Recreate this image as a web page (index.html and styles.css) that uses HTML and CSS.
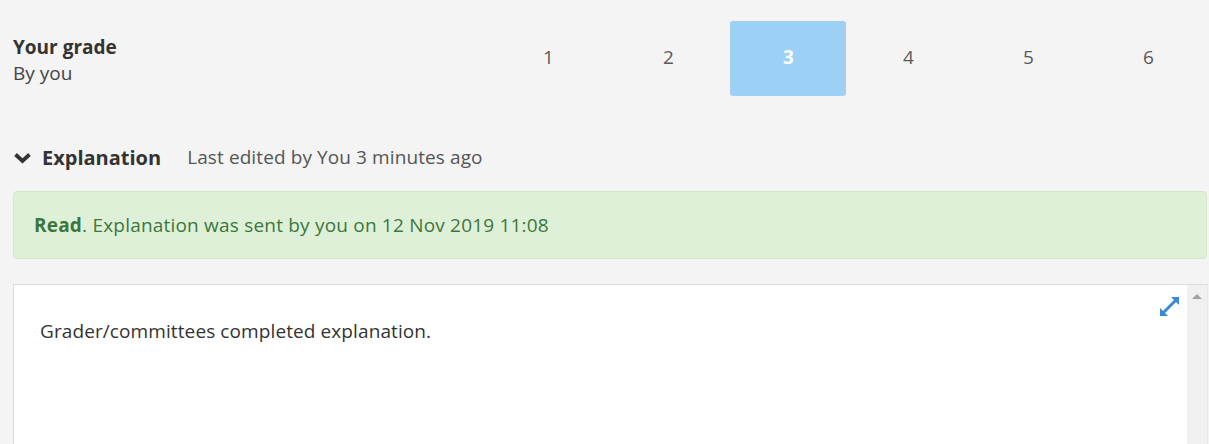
FILE: index.html
```html
<!DOCTYPE html>
<html lang="en">
<head>
<meta charset="utf-8">
<title>Grade</title>
<link rel="stylesheet" href="styles.css">
</head>
<body>
<div class="page">
  <div class="grade-row">
    <div class="grade-label">
      <div class="grade-title">Your grade</div>
      <div class="grade-sub">By you</div>
    </div>
    <div class="grade-list">
      <div class="grade-cell">1</div>
      <div class="grade-cell">2</div>
      <div class="grade-cell selected">3</div>
      <div class="grade-cell">4</div>
      <div class="grade-cell">5</div>
      <div class="grade-cell">6</div>
    </div>
  </div>

  <div class="expl-row">
    <svg class="chevron" width="19" height="12" viewBox="0 0 19 12"><polyline points="2.5,2.5 9.5,9 16.5,2.5" fill="none" stroke="#333" stroke-width="3.8"/></svg>
    <span class="expl-title">Explanation</span>
    <span class="expl-meta">Last edited by You 3 minutes ago</span>
  </div>

  <div class="alert"><strong>Read</strong>. Explanation was sent by you on 12 Nov 2019 11:08</div>

  <div class="editor">
    <div class="editor-content">
      <p class="editor-text">Grader/committees completed explanation.</p>
      <svg class="expand" width="19" height="19" viewBox="0 0 19 19">
        <line x1="3.5" y1="15.5" x2="15.5" y2="3.5" stroke="#3a89d6" stroke-width="3"/>
        <polygon points="11,0 19,0 19,8" fill="#3a89d6"/>
        <polygon points="0,11 0,19 8,19" fill="#3a89d6"/>
      </svg>
    </div>
    <div class="scrollbar"><span class="scroll-up"></span></div>
  </div>
</div>
</body>
</html>
```

FILE: styles.css
```css
html, body {
  margin: 0;
  padding: 0;
  background: #f4f4f4;
}
body {
  font-family: "Open Sans", "Liberation Sans", sans-serif;
  color: #333;
  overflow: hidden;
}
.page {
  padding-left: 13px;
}
.grade-row {
  display: flex;
  align-items: center;
  padding-top: 21px;
}
.grade-label {
  flex: 1;
  padding-top: 2px;
}
.grade-title {
  font-size: 19px;
  font-weight: 700;
  line-height: 26px;
  color: #333;
}
.grade-sub {
  font-size: 19px;
  line-height: 26px;
  color: #444;
}
.grade-list {
  display: flex;
  margin-right: 1px;
}
.grade-cell {
  width: 116px;
  height: 75px;
  margin: 0 2px;
  display: flex;
  align-items: center;
  justify-content: center;
  font-size: 19px;
  color: #5a5a5a;
  border-radius: 3px;
  padding-bottom: 3px;
  padding-left: 1px;
  box-sizing: border-box;
}
.grade-cell.selected {
  background: #9dd0f5;
  color: #fff;
  font-weight: 700;
}
.expl-row {
  display: flex;
  align-items: center;
  margin-top: 48px;
  height: 26px;
}
.chevron {
  margin-left: 0;
  margin-right: 10px;
  margin-top: 2px;
}
.expl-title {
  font-size: 20px;
  font-weight: 700;
  color: #333;
  margin-right: 26px;
}
.expl-meta {
  font-size: 19px;
  color: #555;
  letter-spacing: 0.1px;
}
.alert {
  margin-top: 21px;
  margin-right: 2px;
  background: #dff0d8;
  border: 1px solid #d6e9c6;
  border-radius: 4px;
  color: #3c763d;
  font-size: 19px;
  line-height: 26px;
  padding: 20px 20px;
  letter-spacing: 0.2px;
}
.alert strong {
  font-weight: 700;
}
.editor {
  margin-top: 25px;
  margin-right: 1px;
  display: flex;
  background: #fff;
  border: 1px solid #dcdcdc;
  border-right-color: #e8e8e8;
  height: 260px;
}
.editor-content {
  flex: 1;
  position: relative;
  padding: 33px 26px 0;
}
.editor-text {
  margin: 0;
  font-size: 19px;
  line-height: 26px;
  color: #333;
  letter-spacing: 0.1px;
}
.expand {
  position: absolute;
  top: 12px;
  right: 8px;
}
.scrollbar {
  width: 20px;
  background: #f0f0f0;
  display: flex;
  justify-content: center;
  padding-top: 9px;
  box-sizing: border-box;
}
.scroll-up {
  width: 0;
  height: 0;
  border-left: 5px solid transparent;
  border-right: 5px solid transparent;
  border-bottom: 5px solid #a3a3a3;
}
```
